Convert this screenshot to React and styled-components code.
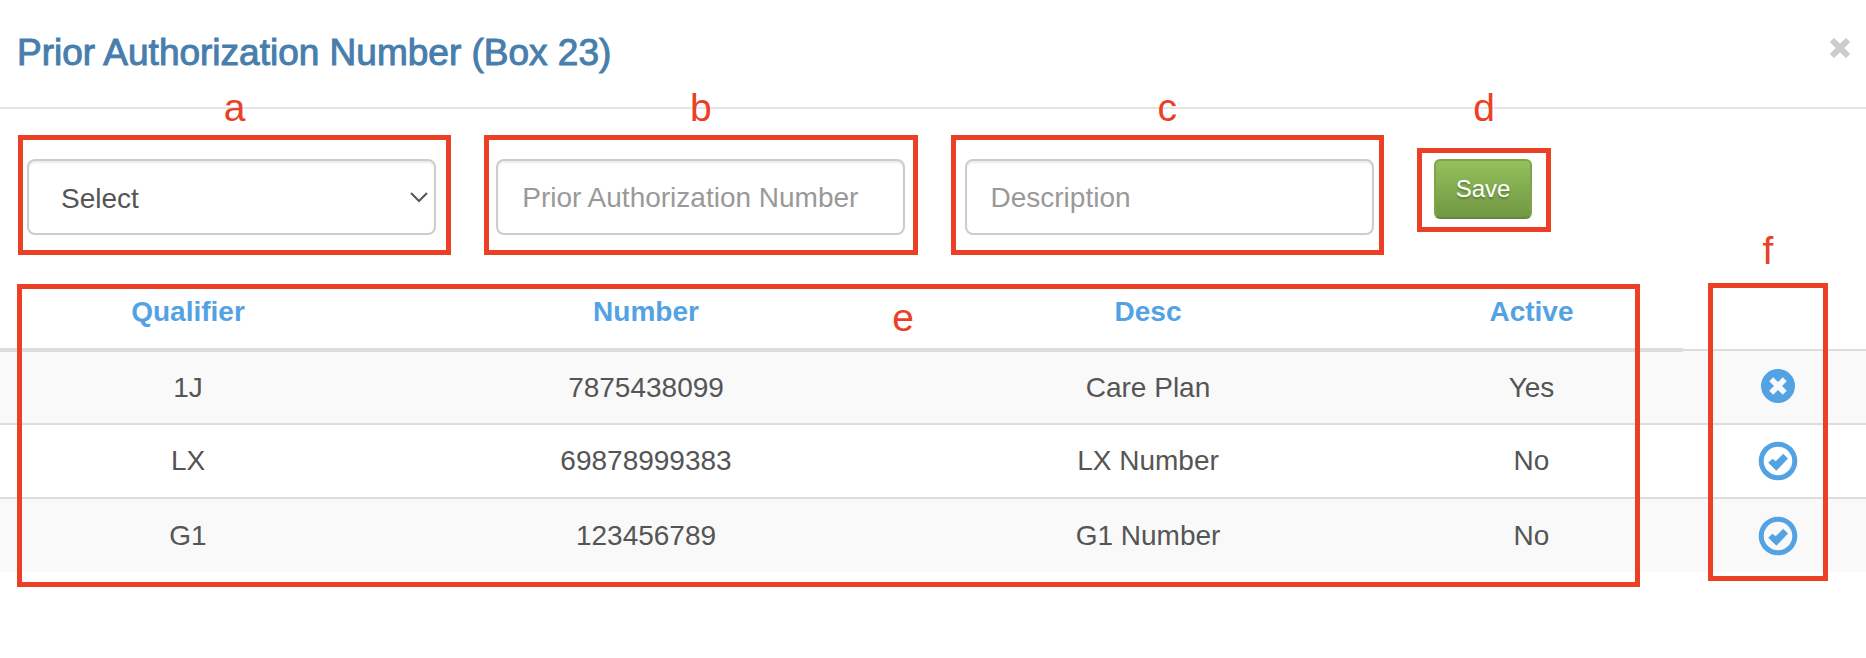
import styled, { createGlobalStyle } from 'styled-components'

const rows = [
  { qualifier: '1J', number: '7875438099', desc: 'Care Plan', active: true },
  { qualifier: 'LX', number: '69878999383', desc: 'LX Number', active: false },
  { qualifier: 'G1', number: '123456789', desc: 'G1 Number', active: false },
]

const RemoveIcon = () => (
  <svg width="40" height="40" viewBox="0 0 40 40" aria-hidden="true">
    <circle cx="20" cy="19" r="17" fill="#53a2e3" />
    <path
      d="M15.2 14.2 L24.8 23.8 M24.8 14.2 L15.2 23.8"
      stroke="#f9f9f9"
      strokeWidth="5.6"
      strokeLinecap="square"
    />
  </svg>
)

const OkIcon = () => (
  <svg width="40" height="40" viewBox="0 0 40 40" aria-hidden="true">
    <circle cx="20" cy="20" r="16.8" fill="none" stroke="#53a2e3" strokeWidth="5" />
    <path
      d="M10.7 21.8 L14.3 18.2 L17.8 20.6 L25.2 13.3 L29.6 17.6 L18.4 29.3 Z"
      fill="#53a2e3"
      stroke="#53a2e3"
      strokeWidth="0.8"
    />
  </svg>
)

const App = () => {
  return (
    <Page>
      <GlobalStyle />
      <Header>
        <Title>Prior Authorization Number (Box 23)</Title>
        <CloseButton type="button" aria-label="Close">
          <svg width="20" height="20" viewBox="0 0 20 20" aria-hidden="true">
            <path d="M2 2 L18 18 M18 2 L2 18" stroke="#ccc" strokeWidth="6" />
          </svg>
        </CloseButton>
      </Header>

      <Form onSubmit={(e) => e.preventDefault()}>
        <Group>
          <Letter>a</Letter>
          <Frame $padding="19px 10px 15px 4px">
            <SelectBox>
              <Select aria-label="Qualifier" defaultValue="">
                <option value="">Select</option>
                <option value="1J">1J</option>
                <option value="LX">LX</option>
                <option value="G1">G1</option>
              </Select>
              <Chevron width="18" height="12" viewBox="0 0 18 12" aria-hidden="true">
                <path d="M1 1 L9 9 L17 1" fill="none" stroke="#555" strokeWidth="2" />
              </Chevron>
            </SelectBox>
          </Frame>
        </Group>
        <Group>
          <Letter>b</Letter>
          <Frame $padding="19px 8px 15px 7px">
            <Input aria-label="Prior Authorization Number" placeholder="Prior Authorization Number" />
          </Frame>
        </Group>
        <Group>
          <Letter>c</Letter>
          <Frame $padding="19px 5px 15px 9px">
            <Input aria-label="Description" placeholder="Description" />
          </Frame>
        </Group>
        <ButtonGroup>
          <Letter>d</Letter>
          <Frame $padding="6px 14px 8px 12px">
            <SaveButton type="submit">Save</SaveButton>
          </Frame>
        </ButtonGroup>
      </Form>

      <TableWrap>
        <Table>
          <colgroup>
            <Col $width={376} />
            <Col $width={540} />
            <Col $width={464} />
            <Col $width={303} />
            <Col $width={183} />
          </colgroup>
          <thead>
            <tr>
              <HeadCell>Qualifier</HeadCell>
              <HeadCell>Number</HeadCell>
              <HeadCell>Desc</HeadCell>
              <HeadCell>Active</HeadCell>
              <td />
            </tr>
          </thead>
          <tbody>
            {rows.map((row) => (
              <Row key={row.qualifier}>
                <Cell>{row.qualifier}</Cell>
                <Cell>{row.number}</Cell>
                <Cell>{row.desc}</Cell>
                <Cell>{row.active ? 'Yes' : 'No'}</Cell>
                <ActionCell>
                  <IconButton type="button" aria-label={row.active ? 'Deactivate' : 'Activate'}>
                    {row.active ? <RemoveIcon /> : <OkIcon />}
                  </IconButton>
                </ActionCell>
              </Row>
            ))}
          </tbody>
        </Table>
        <DataCallout>
          <Letter>e</Letter>
        </DataCallout>
        <ActionCallout>
          <Letter>f</Letter>
        </ActionCallout>
      </TableWrap>
    </Page>
  )
}

export default App

const GlobalStyle = createGlobalStyle`
  * {
    box-sizing: border-box;
  }
  body {
    margin: 0;
    background: #fff;
    color: #555;
    font-family: "Liberation Sans", Arial, sans-serif;
    font-size: 28px;
    line-height: 40px;
  }
`

const Page = styled.main`
  min-height: 100vh;
  padding-bottom: 40px;
`

const Header = styled.header`
  display: flex;
  justify-content: space-between;
  align-items: flex-start;
  padding: 33px 16px 34px 17px;
  border-bottom: 2px solid #e5e5e5;
`

const Title = styled.h4`
  margin: 0;
  color: #487eac;
  font-size: 37px;
  font-weight: 500;
  line-height: 40px;
  -webkit-text-stroke: 1px #487eac;
`

const CloseButton = styled.button`
  display: flex;
  margin-top: 5px;
  padding: 0;
  border: 0;
  background: none;
  cursor: pointer;
`

/* pulled up so that the letters sit on the header line */
const Form = styled.form`
  display: grid;
  grid-template-columns: repeat(4, 1fr);
  align-items: start;
  gap: 33px;
  margin-top: -21px;
  padding: 0 16px 20px 18px;
`

const Group = styled.div`
  display: flex;
  flex-direction: column;
  gap: 7px;
`

const ButtonGroup = styled(Group)`
  gap: 20px;
  justify-self: start;
`

const Letter = styled.span`
  color: #eb4026;
  font-size: 39px;
  line-height: 40px;
  text-align: center;
`

const Frame = styled.div`
  padding: ${(props) => props.$padding};
  border: 5px solid #eb4026;
`

const Input = styled.input`
  display: block;
  width: 100%;
  height: 76px;
  padding: 2px 24px 0;
  border: 2px solid #ccc;
  border-radius: 8px;
  background: #fff;
  box-shadow: inset 0 2px 2px rgba(0, 0, 0, 0.075);
  color: #555;
  font-family: inherit;
  font-size: 28px;

  &::placeholder {
    color: #999;
    opacity: 1;
  }
`

const SelectBox = styled.div`
  position: relative;
`

const Select = styled(Input).attrs({ as: 'select' })`
  padding: 2px 32px 0;
  appearance: none;
`

const Chevron = styled.svg`
  position: absolute;
  top: 33px;
  right: 8px;
  pointer-events: none;
`

const SaveButton = styled.button`
  display: block;
  height: 60px;
  padding: 0 20px;
  border: 2px solid #7da64b;
  border-bottom-color: #64883b;
  border-radius: 6px;
  background: linear-gradient(#94c05b, #719843);
  color: #fff;
  font-family: inherit;
  font-size: 24px;
  text-shadow: 0 2px 2px rgba(0, 0, 0, 0.25);
  cursor: pointer;
`

const TableWrap = styled.div`
  position: relative;
`

const Table = styled.table`
  width: 100%;
  table-layout: fixed;
  border-collapse: collapse;
  text-align: center;
`

const Col = styled.col`
  width: ${(props) => props.$width}px;
`

const HeadCell = styled.th`
  padding: 17px 0 16px;
  border-bottom: 4px solid #ddd;
  color: #53a2e3;
  font-weight: bold;
`

const Row = styled.tr`
  height: 74px;

  &:nth-child(odd) {
    background: #f9f9f9;
  }
`

const Cell = styled.td`
  padding: 0;
  border-top: 2px solid #ddd;
`

const ActionCell = styled(Cell)`
  padding-left: 6px;
`

const IconButton = styled.button`
  display: block;
  margin: 0 auto;
  padding: 0;
  border: 0;
  background: none;
  line-height: 0;
  cursor: pointer;
`

/* red frames drawn over the table */
const Callout = styled.div`
  position: absolute;
  display: flex;
  justify-content: center;
  align-items: flex-start;
  border: 5px solid #eb4026;
  pointer-events: none;
`

const DataCallout = styled(Callout)`
  inset: 9px 226px -15px 17px;
  padding: 9px 0 0 8%;
`

const ActionCallout = styled(Callout)`
  inset: 8px 38px -9px auto;
  width: 120px;

  ${Letter} {
    margin-top: -57px;
  }
`
